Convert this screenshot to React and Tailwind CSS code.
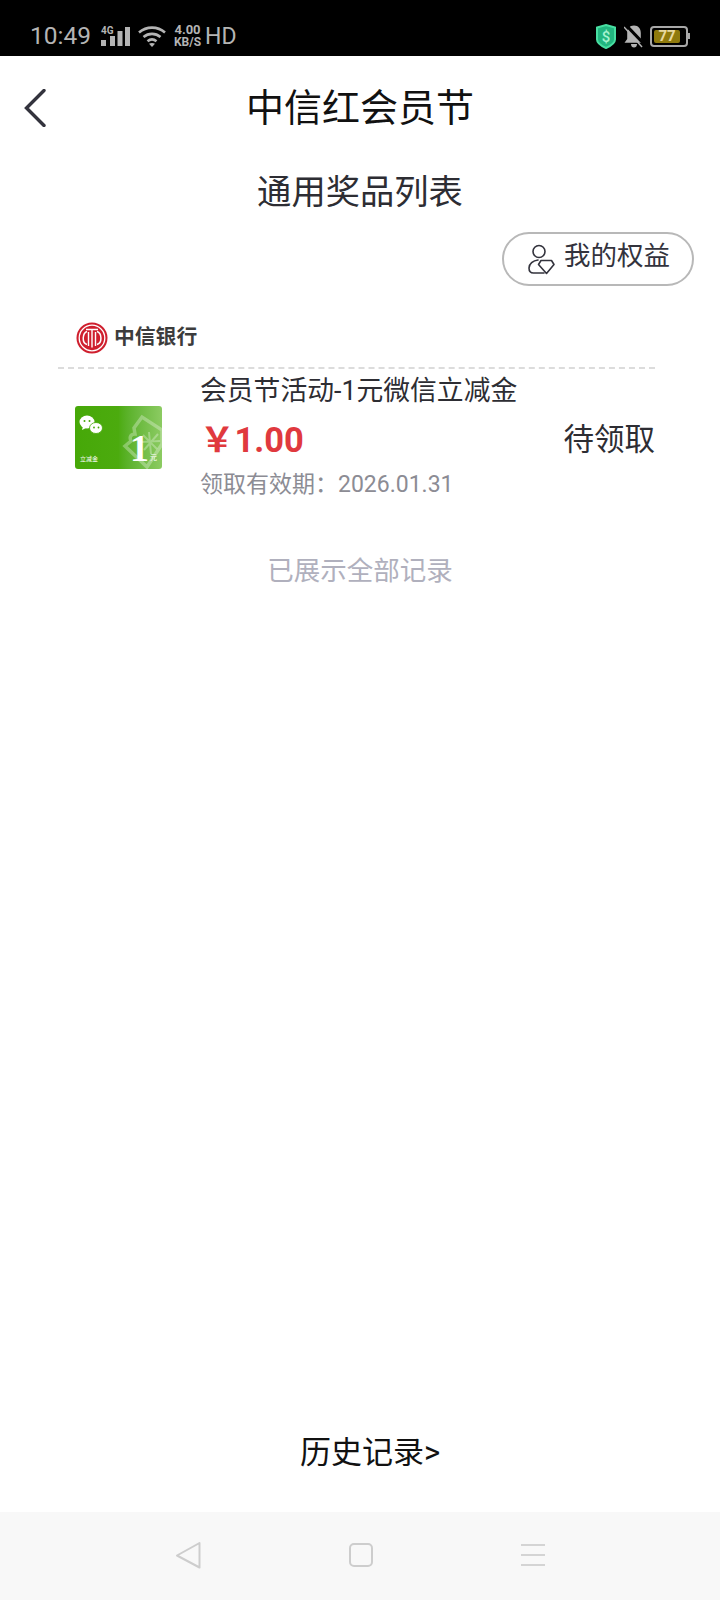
import React from 'react';

const font = { fontFamily: 'Roboto, "Noto Sans CJK SC", sans-serif' };

// status bar glyphs
function Signal() {
  return (
    <div className="relative w-[30px] h-[19px] shrink-0">
      <span className="absolute left-0 -top-[1px] text-[10px] leading-[10px] font-bold text-[#b4b4b4]">4G</span>
      <svg viewBox="0 0 30 19" className="absolute inset-0 w-[30px] h-[19px]" fill="#b4b4b4">
        <rect x="0" y="13" width="5" height="6" />
        <rect x="9" y="9" width="5" height="10" />
        <rect x="16.500" y="4" width="5" height="15" />
        <rect x="24" y="0" width="5" height="19" />
      </svg>
    </div>
  );
}

function Wifi() {
  return (
    <svg viewBox="0 0 28 22" className="w-[28px] h-[22px] shrink-0" fill="none" stroke="#b4b4b4" strokeWidth="2.600">
      <path d="M1 7.500C8.500 1 19.500 1 27 7.500" />
      <path d="M5.500 12C10.500 7.800 17.500 7.800 22.500 12" />
      <path d="M9.500 16.200C12.200 14 15.800 14 18.500 16.200" />
      <path d="M14 22l-3-3.200c1.800-1.200 4.200-1.200 6 0z" fill="#b4b4b4" stroke="none" />
    </svg>
  );
}

function Shield() {
  return (
    <svg viewBox="0 0 20 25" className="w-[20px] h-[25px]">
      <path d="M10 1L19 3.500v12c0 3.500-4.500 6.500-9 8.500-4.500-2-9-5-9-8.500v-12z" fill="#22b57f" stroke="#48dfa2" strokeWidth="2" />
      <text x="10" y="17.500" textAnchor="middle" fontSize="15" fontWeight="500" fill="#a5f3d0" style={font}>$</text>
    </svg>
  );
}

function MutedBell() {
  return (
    <svg viewBox="0 0 20 24" className="w-[20px] h-[24px]">
      <path d="M10 1.500c4.500 0 6.800 3.400 6.800 7.500v6l2.700 3.800H.5L3.200 15V9c0-4.100 2.300-7.500 6.800-7.500z" fill="#b4b4b4" />
      <path d="M7 20h6c0 2.400-1.300 3.600-3 3.600S7 22.400 7 20z" fill="#b4b4b4" />
      <path d="M1 0l19 20" stroke="#000" strokeWidth="3" />
      <path d="M0 3l18 20" stroke="#b4b4b4" strokeWidth="1.500" />
    </svg>
  );
}

function Battery() {
  return (
    <div className="flex items-center">
      <div className="w-[38px] h-[21px] rounded-[4px] border-2 border-[#a8a8a8] p-[2px] flex">
        <div className="w-[26px] h-full rounded-[2px] bg-[#8f7a0c] flex items-center justify-center text-[15px] leading-none font-bold text-[#e8d9a0]">77</div>
      </div>
      <div className="w-[2px] h-[6px] bg-[#a8a8a8]" />
    </div>
  );
}

function StatusBar() {
  return (
    <div className="h-14 bg-black flex items-center justify-between pl-[30px] pr-[30px] pt-[16px] shrink-0">
      <div className="flex items-center text-[#b4b4b4]">
        <span className="text-[24.500px] leading-none w-[71px]">10:49</span>
        <Signal />
        <div className="w-[7px] shrink-0" />
        <Wifi />
        <div className="w-[7px] shrink-0" />
        <div className="flex flex-col items-center font-bold text-[12px] leading-[12px] w-[29px]">
          <span className="text-[13px]">4.00</span>
          <span>KB/S</span>
        </div>
        <span className="text-[23px] leading-none ml-[3px]">HD</span>
      </div>
      <div className="flex items-center">
        <Shield />
        <div className="w-[8px]" />
        <MutedBell />
        <div className="w-[6px]" />
        <Battery />
      </div>
    </div>
  );
}

// person with a gem, used on the 我的权益 pill
function PersonGem() {
  return (
    <svg viewBox="7 5 30 31" className="w-[30px] h-[31px] shrink-0" fill="none" stroke="#33333d" strokeWidth="1.600" strokeLinecap="round" strokeLinejoin="round">
      <circle cx="19" cy="12.500" r="6" />
      <path d="M18 21c-5 .5-9 4-9 8 0 3 1.500 5 4.500 5H24" />
      <path d="M21 21.500h10.500l2.500 4-7.500 9-8-9z" />
    </svg>
  );
}

function CiticLogo() {
  return (
    <svg viewBox="0 0 32 32" className="w-[32px] h-[32px] shrink-0">
      <circle cx="16" cy="16" r="15.500" fill="#cf1f2e" />
      <circle cx="16" cy="16" r="12.800" fill="none" stroke="#fff" strokeWidth="1.300" />
      {/* the C I T I C bars */}
      <path d="M11 9.500C6.500 11 5.500 21 11 22.500" fill="none" stroke="#fff" strokeWidth="1.500" />
      <path d="M21 9.500C26 11 26.500 21 21 22.500" fill="none" stroke="#fff" strokeWidth="1.500" />
      <path d="M10 7.500h12M16 7.500v18M12.500 10v14M19.500 10v14" fill="none" stroke="#fff" strokeWidth="1.400" />
    </svg>
  );
}

// green 1 yuan wechat voucher card
function VoucherCard() {
  return (
    <div className="relative w-[87px] h-[63px] rounded-[3px] overflow-hidden shrink-0 bg-gradient-to-r from-[#46a808] via-[#4cab0e] to-[#8ccb62]">
      <svg viewBox="0 0 87 63" className="absolute inset-0 w-[87px] h-[63px]">
        <path d="M50 40l6-5c-2-4 0-7 4-7l-1-6 8-11 20 13v14L72 61z" fill="none" stroke="#ffffff" strokeOpacity="0.3" strokeWidth="3.500" />
        <path d="M74 26l2 22M66 36l19-1M68 29l14 14M83 28L69 44" stroke="#ffffff" strokeOpacity="0.3" strokeWidth="2" />
        <ellipse cx="12" cy="16" rx="7.500" ry="6.500" fill="#fff" />
        <path d="M8 20l-1 4 4-2z" fill="#fff" />
        <ellipse cx="21" cy="22" rx="6.500" ry="5.500" fill="#fff" stroke="#46a808" strokeWidth="0.800" />
        <circle cx="9.500" cy="15" r="1" fill="#46a808" />
        <circle cx="14.500" cy="15" r="1" fill="#46a808" />
        <circle cx="19" cy="21.500" r="0.900" fill="#46a808" />
        <circle cx="23.500" cy="21.500" r="0.900" fill="#46a808" />
      </svg>
      <span className="absolute left-[5px] bottom-[7px] text-[6px] leading-none text-white">立减金</span>
      <span className="absolute left-[55px] bottom-[2px] text-[38px] leading-none font-bold text-white" style={{ fontFamily: '"Liberation Serif", serif' }}>1</span>
      <span className="absolute right-[5px] bottom-[7px] text-[7px] leading-none text-white">元</span>
    </div>
  );
}

function NavBar() {
  return (
    <div className="mt-[25px] h-[54px] px-6 grid grid-cols-[1fr_auto_1fr] items-center shrink-0">
      <svg viewBox="0 0 22 38" className="w-[22px] h-[38px]" fill="none" stroke="#33333d" strokeWidth="3.400" strokeLinecap="round">
        <path d="M20 1.500L2.500 19 20 36.500" />
      </svg>
      <div className="text-[38px] text-[#111] leading-none">中信红会员节</div>
      <div />
    </div>
  );
}

export default function App() {
  return (
    <div className="w-[720px] h-[1600px] bg-white flex flex-col overflow-hidden" style={font}>
      <StatusBar />
      <NavBar />

      <div className="mt-[32px] text-center text-[34.300px] leading-[50px] text-[#2d2d33]">通用奖品列表</div>

      <div className="flex justify-end pr-[26px] mt-[15px]">
        <div className="w-[192px] h-[54px] rounded-full border-2 border-[#b8b8b8] flex items-center pl-[23px] gap-[7px] text-[26.500px] text-[#33333d]">
          <PersonGem />
          <span className="leading-none -mt-[6px]">我的权益</span>
        </div>
      </div>

      <div className="mt-[36px] ml-[58px] mr-[65px]">
        <div className="flex items-center pl-[18px] gap-[6px] h-[31px]">
          <CiticLogo />
          <span className="text-[20.800px] leading-none font-semibold text-[#3c3c3c]">中信银行</span>
        </div>
        <div className="mt-[14px] border-t-2 border-dashed border-[#dcdcdc]" />

        <div className="flex items-center pl-[17px] h-[136px]">
          <VoucherCard />
          <div className="ml-[38px] flex-1 flex flex-col -mt-[2px]">
            <span className="text-[26.800px] leading-[40px] text-[#2d2d33]">会员节活动-1元微信立减金</span>
            <span className="mt-[7px] text-[34.500px] leading-[44px] font-bold text-[#e0393e]">￥1.00</span>
            <span className="mt-[6px] text-[23px] leading-[34px] text-[#8c8c94]">领取有效期：2026.01.31</span>
          </div>
          <span className="mt-[6px] text-[30.500px] leading-none text-[#2d2d33]">待领取</span>
        </div>
      </div>

      <div className="mt-[46px] text-center text-[26.500px] leading-[40px] text-[#b0b0bd]">已展示全部记录</div>

      <div className="mt-auto pb-[37px] pl-[20px] text-center text-[31px] leading-[44px] text-[#111]">历史记录&gt;</div>

      <div className="h-[88px] bg-[#f8f8f8] flex items-center justify-center gap-[148px] pb-[2px] shrink-0">
        <svg viewBox="0 0 26 28" className="w-[26px] h-[28px]" fill="none" stroke="#cdcdcd" strokeWidth="2" strokeLinejoin="round">
          <path d="M24.500 2L2 14.500 24.500 26.500z" />
        </svg>
        <div className="w-[24px] h-[24px] rounded-[5px] border-2 border-[#cdcdcd]" />
        <div className="w-[24px] h-[22px] flex flex-col justify-between">
          <div className="h-[2px] bg-[#d4d4d4]" />
          <div className="h-[2px] bg-[#d4d4d4]" />
          <div className="h-[2px] bg-[#d4d4d4]" />
        </div>
      </div>
    </div>
  );
}
